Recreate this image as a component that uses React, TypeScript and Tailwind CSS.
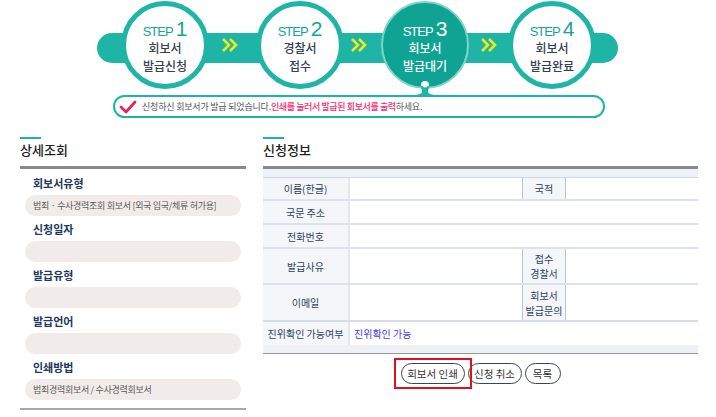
import React from "react";

const FONT = "font-['Noto_Sans_CJK_KR','Noto_Sans',sans-serif]";

const Chevron = () => (
  <svg width="18" height="16" viewBox="0 0 18 16" className="shrink-0">
    <path d="M2 2 L8 8 L2 14" fill="none" stroke="#e9ec1a" strokeWidth="2.6" />
    <path d="M9 2 L15 8 L9 14" fill="none" stroke="#e9ec1a" strokeWidth="2.6" />
  </svg>
);

interface StepProps {
  n: number;
  line1: string;
  line2: string;
  active?: boolean;
}

const Step = ({ n, line1, line2, active }: StepProps) => (
  <div
    className={
      "relative z-10 flex h-[88px] w-[88px] shrink-0 flex-col items-center justify-center rounded-full pt-[4px] " +
      (active
        ? "bg-[#0ea392] border-[2px] border-[#7fd3c8] text-white"
        : "bg-white border-[5px] border-[#1fb5a6] text-[#34404e]")
    }
  >
    <div className={"flex h-[19px] items-end leading-none " + (active ? "text-white" : "text-[#14a595]")}>
      <span className="font-['Liberation_Sans',sans-serif] text-[13px] tracking-[-1px]">STEP</span>
      <span className="ml-[3px] font-['Liberation_Sans',sans-serif] text-[21px] leading-[18px]">{n}</span>
    </div>
    <div className="mt-[1px] text-center text-[12px] font-medium leading-[18px]">
      <div>{line1}</div>
      <div>{line2}</div>
    </div>
  </div>
);

const SectionTitle = ({ title }: { title: string }) => (
  <div>
    <div className="h-[2px] w-[21px] bg-[#1fb5a6]" />
    <div className="mt-[2px] h-[25px] text-[13px] font-medium leading-[17px] text-[#222]">{title}</div>
    <div className="h-[3px] bg-[#8a8a8e]" />
  </div>
);

const fields = [
  { label: "회보서유형", value: "범죄 · 수사경력조회 회보서 [외국 입국/체류 허가용]" },
  { label: "신청일자", value: "" },
  { label: "발급유형", value: "" },
  { label: "발급언어", value: "" },
  { label: "인쇄방법", value: "범죄경력회보서 / 수사경력회보서" },
];

const Label = ({ children, right }: { children: React.ReactNode; right?: boolean }) => (
  <div
    className={
      "flex items-center justify-center bg-[#f4f6f9] text-center text-[10px] leading-[15px] text-[#2d4260] " +
      (right ? "border-x border-[#b5c3de]" : "border-r-2 border-[#e3e7ef]")
    }
  >
    {children}
  </div>
);

export default function App() {
  return (
    <div className={"w-[716px] h-[417px] overflow-hidden bg-white " + FONT}>
      {/* steps */}
      <div className="relative h-[95px] pt-[1px]">
        <div className="absolute left-[97px] top-[33px] h-[30px] w-[521px] rounded-full bg-[#1fb5a6]" />
        <div className="relative flex items-center pl-[121px]">
          <Step n={1} line1="회보서" line2="발급신청" />
          <div className="ml-[12px] mr-[17px] relative z-10"><Chevron /></div>
          <Step n={2} line1="경찰서" line2="접수" />
          <div className="ml-[6px] mr-[13px] relative z-10"><Chevron /></div>
          <Step n={3} line1="회보서" line2="발급대기" active />
          <div className="ml-[11px] mr-[10px] relative z-10"><Chevron /></div>
          <Step n={4} line1="회보서" line2="발급완료" />
        </div>
        <svg className="absolute left-[405px] top-[80px] z-20" width="40" height="17" viewBox="0 0 40 17">
          <circle cx="20" cy="5" r="4" fill="white" />
          <path d="M16 6 Q16 9 17 10 L17 12 Q17 14 10 15 L2 17 L38 17 L30 15 Q23 14 23 12 L23 10 Q24 9 24 6 Z" fill="#1fb5a6" />
          <circle cx="20" cy="5" r="2.5" fill="white" />
        </svg>
      </div>

      {/* message */}
      <div className="ml-[113px] flex h-[23px] w-[492px] items-center rounded-full border-2 border-[#1fb5a6] pl-[4px] text-[9px] tracking-[-0.2px]">
        <svg width="18" height="14" viewBox="0 0 18 14" className="mr-[5px]">
          <path d="M2 7 L7 12 L16 2" fill="none" stroke="#e8245e" strokeWidth="2.8" strokeLinecap="round" strokeLinejoin="round" />
        </svg>
        <span className="text-[#555]">신청하신 회보서가 발급 되었습니다.</span>
        <span className="font-medium tracking-[-0.4px] text-[#ff2a6d]">인쇄를 눌러서 발급된 회보서를 출력</span>
        <span className="text-[#555]">하세요.</span>
      </div>

      {/* body */}
      <div className="mt-[19px] flex">
        <div className="ml-[20px] w-[226px]">
          <SectionTitle title="상세조회" />
          <div className="px-[5px] pt-[3px]">
            {fields.map((f) => (
              <div key={f.label}>
                <div className="h-[23px] pl-[8px] text-[11px] font-bold leading-[23px] text-[#22385c]">{f.label}</div>
                <div className="mb-[2px] flex h-[21px] items-center rounded-full bg-[#f1ece9] pl-[8px] text-[9px] text-[#5a5a5a] tracking-[-0.3px]">
                  {f.value}
                </div>
              </div>
            ))}
          </div>
          <div className="mt-[8px] h-[2px] bg-[#a9a9ad]" />
        </div>

        <div className="ml-[17px] w-[435px]">
          <SectionTitle title="신청정보" />
          <div className="h-[9px] border-b border-[#d0d7e5] bg-[#eef1f6]" />
          <div className="grid grid-cols-[87px_172px_44px_1fr] text-[10px]">
            <div className="col-span-4 grid h-[23px] grid-cols-subgrid border-b-2 border-[#dde2ec]">
              <Label>이름(한글)</Label>
              <div />
              <Label right>국적</Label>
              <div />
            </div>
            <div className="col-span-4 grid h-[24px] grid-cols-subgrid border-b-2 border-[#dde2ec]">
              <Label>국문 주소</Label>
              <div className="col-span-3" />
            </div>
            <div className="col-span-4 grid h-[24px] grid-cols-subgrid border-b-2 border-[#dde2ec]">
              <Label>전화번호</Label>
              <div className="col-span-3" />
            </div>
            <div className="col-span-4 grid h-[36px] grid-cols-subgrid border-b-2 border-[#dde2ec]">
              <Label>발급사유</Label>
              <div />
              <Label right>
                접수
                <br />
                경찰서
              </Label>
              <div />
            </div>
            <div className="col-span-4 grid h-[37px] grid-cols-subgrid border-b-2 border-[#d5dbe8]">
              <Label>이메일</Label>
              <div />
              <Label right>
                회보서
                <br />
                발급문의
              </Label>
              <div />
            </div>
            <div className="col-span-4 grid h-[23px] grid-cols-subgrid">
              <Label>진위확인 가능여부</Label>
              <div className="col-span-3 flex items-center pl-[4px] text-[#3b3bf0]">진위확인 가능</div>
            </div>
          </div>
          <div className="h-[9px] border-b border-[#9a9a9e] bg-[#eef1f6]" />

          <div className="mt-[9px] flex justify-center gap-[3px] text-[10.5px] text-[#333]">
            <div className="relative">
              <div className="absolute -left-[7px] -top-[5px] h-[31px] w-[78px] border-2 border-[#e0121f]" />
              <button className="h-[21px] w-[64px] rounded-full border-[1.5px] border-[#38435e] bg-white">회보서 인쇄</button>
            </div>
            <button className="h-[21px] w-[54px] rounded-full border-[1.5px] border-[#38435e] bg-white">신청 취소</button>
            <button className="h-[21px] w-[36px] rounded-full border-[1.5px] border-[#38435e] bg-white">목록</button>
          </div>
        </div>
      </div>
    </div>
  );
}
